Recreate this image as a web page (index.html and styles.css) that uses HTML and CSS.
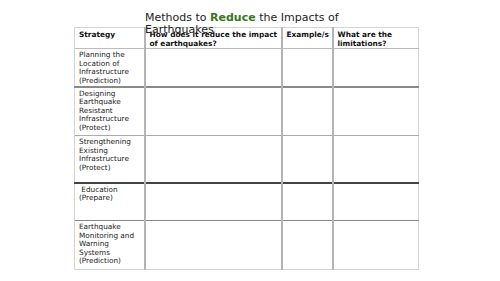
FILE: index.html
```html
<!DOCTYPE html>
<html lang="en">
	<head>
		<meta charset="UTF-8" />
		<meta name="viewport" content="width=device-width, initial-scale=1.0" />
		<title>Methods to Reduce the Impacts of Earthquakes</title>
		<link rel="stylesheet" href="styles.css">
	</head>
	<body>
		<div class="slide">
			<h1 class="title">Methods to <span class="title-key">Reduce</span> the Impacts of Earthquakes</h1>
			<table class="grid">
				<colgroup>
					<col class="col-strategy" />
					<col class="col-how" />
					<col class="col-example" />
					<col class="col-limits" />
				</colgroup>
				<tr class="row-head">
					<th>Strategy</th>
					<th>How does it reduce the impact of earthquakes?</th>
					<th>Example/s</th>
					<th>What are the limitations?</th>
				</tr>
				<tr class="row-1">
					<td>Planning the Location of Infrastructure (Prediction)</td>
					<td></td><td></td><td></td>
				</tr>
				<tr class="row-2">
					<td>Designing Earthquake Resistant Infrastructure (Protect)</td>
					<td></td><td></td><td></td>
				</tr>
				<tr class="row-3">
					<td>Strengthening Existing Infrastructure (Protect)</td>
					<td></td><td></td><td></td>
				</tr>
				<tr class="row-4">
					<td>&nbsp;Education (Prepare)</td>
					<td></td><td></td><td></td>
				</tr>
				<tr class="row-5">
					<td>Earthquake Monitoring and Warning Systems (Prediction)</td>
					<td></td><td></td><td></td>
				</tr>
			</table>
		</div>
	</body>
</html>
```

FILE: styles.css
```css
body {
	margin: 0;
	background-color: #fff;
	font-family: "DejaVu Sans", sans-serif;
	color: #222;
}
.slide {
	width: 500px;
	height: 281px;
	padding-top: 12px;
	box-sizing: border-box;
}
.title {
	margin: 0 0 0 145px;
	width: 200px;
	height: 15px;
	font-size: 11px;
	line-height: 11.5px;
	font-weight: normal;
	color: #222;
	position: relative;
	z-index: 1;
}
.title-key {
	font-weight: bold;
	color: #38761d;
}
.grid {
	margin-left: 74px;
	width: 344px;
	table-layout: fixed;
	border-collapse: collapse;
	border: 1px solid #d4d4d4;
	font-size: 7.3px;
	line-height: 8.5px;
}
.col-strategy {
	width: 70px;
}
.col-how {
	width: 137px;
}
.col-example {
	width: 51px;
}
.col-limits {
	width: 86px;
}
.grid th,
.grid td {
	vertical-align: top;
	text-align: left;
	padding: 2px 3px 0 4px;
	border-left: 2px solid #b4b4b4;
	border-top: 1px solid #aaa;
}
.grid th {
	font-size: 7.4px;
	font-weight: bold;
	color: #111;
	padding-top: 3px;
}
.grid th:first-child,
.grid td:first-child {
	border-left: 1px solid #d4d4d4;
}
.row-head {
	height: 21px;
}
.row-head th {
	border-top: 1px solid #d4d4d4;
}
.row-1 {
	height: 38px;
}
.row-1 td {
	border-top-color: #bbb;
}
.row-2 {
	height: 49px;
}
.row-2 td {
	border-top: 2px solid #8a8a8a;
}
.row-3 {
	height: 47px;
}
.row-3 td {
	border-top-color: #aaa;
}
.row-4 {
	height: 38px;
}
.row-4 td {
	border-top: 2px solid #444;
}
.row-5 {
	height: 49px;
}
.row-5 td {
	border-top-color: #888;
}
```
